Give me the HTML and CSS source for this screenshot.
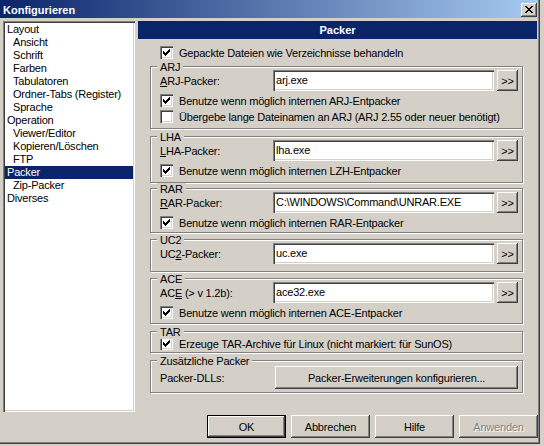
FILE: index.html
```html
<!DOCTYPE html>
<html lang="de">
<head>
<meta charset="utf-8">
<title>Konfigurieren</title>
<link rel="stylesheet" href="styles.css">
</head>
<body>
<div class="window">
  <div class="titlebar">
    <span class="title">Konfigurieren</span>
    <span class="close"><svg width="8" height="7" viewBox="0 0 8 7"><path d="M0 0h2v1h-2zM6 0h2v1h-2zM1 1h2v1h-2zM5 1h2v1h-2zM2 2h4v1h-4zM3 3h2v1h-2zM2 4h4v1h-4zM1 5h2v1h-2zM5 5h2v1h-2zM0 6h2v1h-2zM6 6h2v1h-2z" fill="#000"/></svg></span>
  </div>
  <div class="client">
    <div class="main">
      <ul class="tree">
        <li class="top">Layout</li>
        <li class="sub">Ansicht</li>
        <li class="sub">Schrift</li>
        <li class="sub">Farben</li>
        <li class="sub">Tabulatoren</li>
        <li class="sub">Ordner-Tabs (Register)</li>
        <li class="sub">Sprache</li>
        <li class="top">Operation</li>
        <li class="sub">Viewer/Editor</li>
        <li class="sub">Kopieren/Löschen</li>
        <li class="sub">FTP</li>
        <li class="top selected">Packer</li>
        <li class="sub">Zip-Packer</li>
        <li class="top">Diverses</li>
      </ul>
      <div class="panel">
        <div class="panel-head">Packer</div>
        <div class="check-row top-check"><span class="cb"><svg width="7" height="7" viewBox="0 0 7 7"><path d="M0 2h1v3h-1zM1 3h1v3h-1zM2 4h1v3h-1zM3 3h1v3h-1zM4 2h1v3h-1zM5 1h1v3h-1zM6 0h1v3h-1z" fill="#000"/></svg></span><span class="cb-text">Gepackte Dateien wie Verzeichnisse behandeln</span></div>

        <div class="group g-arj">
          <span class="legend">ARJ</span>
          <div class="field-row"><span class="field-label"><u>A</u>RJ-Packer:</span><span class="input">arj.exe</span><span class="browse">&gt;&gt;</span></div>
          <div class="check-row"><span class="cb"><svg width="7" height="7" viewBox="0 0 7 7"><path d="M0 2h1v3h-1zM1 3h1v3h-1zM2 4h1v3h-1zM3 3h1v3h-1zM4 2h1v3h-1zM5 1h1v3h-1zM6 0h1v3h-1z" fill="#000"/></svg></span><span class="cb-text">Benutze wenn möglich internen ARJ-Entpacker</span></div>
          <div class="check-row row2"><span class="cb"></span><span class="cb-text">Übergebe lange Dateinamen an ARJ (ARJ 2.55 oder neuer benötigt)</span></div>
        </div>

        <div class="group g-lha">
          <span class="legend">LHA</span>
          <div class="field-row"><span class="field-label"><u>L</u>HA-Packer:</span><span class="input">lha.exe</span><span class="browse">&gt;&gt;</span></div>
          <div class="check-row"><span class="cb"><svg width="7" height="7" viewBox="0 0 7 7"><path d="M0 2h1v3h-1zM1 3h1v3h-1zM2 4h1v3h-1zM3 3h1v3h-1zM4 2h1v3h-1zM5 1h1v3h-1zM6 0h1v3h-1z" fill="#000"/></svg></span><span class="cb-text">Benutze wenn möglich internen LZH-Entpacker</span></div>
        </div>

        <div class="group g-rar">
          <span class="legend">RAR</span>
          <div class="field-row"><span class="field-label"><u>R</u>AR-Packer:</span><span class="input">C:\WINDOWS\Command\UNRAR.EXE</span><span class="browse">&gt;&gt;</span></div>
          <div class="check-row"><span class="cb"><svg width="7" height="7" viewBox="0 0 7 7"><path d="M0 2h1v3h-1zM1 3h1v3h-1zM2 4h1v3h-1zM3 3h1v3h-1zM4 2h1v3h-1zM5 1h1v3h-1zM6 0h1v3h-1z" fill="#000"/></svg></span><span class="cb-text">Benutze wenn möglich internen RAR-Entpacker</span></div>
        </div>

        <div class="group g-uc2">
          <span class="legend">UC2</span>
          <div class="field-row"><span class="field-label">UC<u>2</u>-Packer:</span><span class="input">uc.exe</span><span class="browse">&gt;&gt;</span></div>
        </div>

        <div class="group g-ace">
          <span class="legend">ACE</span>
          <div class="field-row"><span class="field-label">AC<u>E</u> (&gt; v 1.2b):</span><span class="input">ace32.exe</span><span class="browse">&gt;&gt;</span></div>
          <div class="check-row"><span class="cb"><svg width="7" height="7" viewBox="0 0 7 7"><path d="M0 2h1v3h-1zM1 3h1v3h-1zM2 4h1v3h-1zM3 3h1v3h-1zM4 2h1v3h-1zM5 1h1v3h-1zM6 0h1v3h-1z" fill="#000"/></svg></span><span class="cb-text">Benutze wenn möglich internen ACE-Entpacker</span></div>
        </div>

        <div class="group g-tar">
          <span class="legend">TAR</span>
          <div class="check-row"><span class="cb"><svg width="7" height="7" viewBox="0 0 7 7"><path d="M0 2h1v3h-1zM1 3h1v3h-1zM2 4h1v3h-1zM3 3h1v3h-1zM4 2h1v3h-1zM5 1h1v3h-1zM6 0h1v3h-1z" fill="#000"/></svg></span><span class="cb-text">Erzeuge TAR-Archive für Linux (nicht markiert: für SunOS)</span></div>
        </div>

        <div class="group g-extra">
          <span class="legend">Zusätzliche Packer</span>
          <div class="field-row"><span class="field-label wide">Packer-DLLs:</span><span class="btn wide-btn">Packer-Erweiterungen konfigurieren...</span></div>
        </div>
      </div>
    </div>
    <div class="buttons">
      <span class="btn dlg default">OK</span>
      <span class="btn dlg">Abbrechen</span>
      <span class="btn dlg">Hilfe</span>
      <span class="btn dlg disabled">Anwenden</span>
    </div>
  </div>
</div>
</body>
</html>
```

FILE: styles.css
```css
* { box-sizing: border-box; }
html, body { margin: 0; padding: 0; }
body {
  background: #d4d0c8;
  font-family: "Liberation Sans", Arial, sans-serif;
  font-size: 11px;
  letter-spacing: -0.2px;
  color: #000;
  width: 544px;
  height: 446px;
  overflow: hidden;
}
.window {
  width: 540px;
  height: 444px;
  background: #d4d0c8;
  box-shadow: inset -1px -1px #404040, inset -2px -2px #808080;
}
.titlebar {
  width: 538px;
  height: 18px;
  background: linear-gradient(to right, #0a246a, #a6caf0);
  display: flex;
  align-items: flex-start;
  justify-content: space-between;
  padding: 0 1px 0 3px;
}
.title {
  color: #fff;
  font-weight: bold;
  letter-spacing: 0;
  line-height: 13px;
  margin-top: 4px;
}
.close {
  width: 16px;
  height: 14px;
  margin-top: 3px;
  background: #d4d0c8;
  box-shadow: inset -1px -1px #404040, inset 1px 1px #fff, inset -2px -2px #808080, inset 2px 2px #d4d0c8;
  display: flex;
  align-items: center;
  justify-content: center;
  padding-bottom: 1px;
}
.close svg { display: block; }
.client { padding: 3px 1px 0 3px; }
.main { display: flex; gap: 3px; height: 391px; }
.tree {
  list-style: none;
  margin: 0;
  padding: 2px;
  width: 132px;
  height: 391px;
  background: #fff;
  box-shadow: inset 1px 1px #808080, inset 2px 2px #404040, inset -1px -1px #fff, inset -2px -2px #d4d0c8;
}
.tree li { height: 13px; line-height: 13px; white-space: nowrap; }
.tree li.top { padding-left: 2px; }
.tree li.sub { padding-left: 8px; }
.tree li.selected { background: #0a246a; color: #fff; }
.panel { width: 399px; display: flex; flex-direction: column; }
.panel-head {
  height: 18px;
  line-height: 18px;
  background: #0a246a;
  color: #fff;
  font-weight: bold;
  letter-spacing: 0;
  text-align: center;
}
.check-row { display: flex; align-items: flex-start; height: 16px; line-height: 16px; white-space: nowrap; }
.cb {
  flex: none;
  width: 13px;
  height: 13px;
  margin-top: 1px;
  margin-right: 6px;
  padding: 3px;
  background: #fff;
  box-shadow: inset 1px 1px #808080, inset 2px 2px #404040, inset -1px -1px #fff, inset -2px -2px #d4d0c8;
}
.cb svg { display: block; }
.top-check { margin-top: 6px; padding-left: 22px; }
.group {
  position: relative;
  margin-left: 12px;
  width: 373px;
  border: 1px solid #808080;
  box-shadow: inset 1px 1px #fff, 1px 1px #fff;
  padding: 3px 4px 0 9px;
}
.legend {
  position: absolute;
  left: 6px;
  top: -6px;
  padding: 0 3px;
  line-height: 13px;
  background: #d4d0c8;
  white-space: nowrap;
}
.field-row { display: flex; align-items: center; height: 21px; }
.field-label { width: 113px; flex: none; white-space: nowrap; }
.field-label.wide { width: 115px; }
.input {
  flex: 1;
  height: 21px;
  line-height: 21px;
  padding: 0 3px;
  background: #fff;
  white-space: nowrap;
  overflow: hidden;
  box-shadow: inset 1px 1px #808080, inset 2px 2px #404040, inset -1px -1px #fff, inset -2px -2px #d4d0c8;
}
.browse, .btn {
  background: #d4d0c8;
  box-shadow: inset -1px -1px #404040, inset 1px 1px #fff, inset -2px -2px #808080, inset 2px 2px #d4d0c8;
  display: flex;
  align-items: center;
  justify-content: center;
  white-space: nowrap;
}
.browse { width: 21px; height: 21px; margin-left: 3px; flex: none; }
.group .check-row { margin-top: 2px; }
.group .check-row.row2 { margin-top: 0; }
.g-arj { margin-top: 5px; height: 63px; }
.g-lha { margin-top: 7px; height: 47px; }
.g-rar { margin-top: 5px; height: 45px; }
.g-uc2 { margin-top: 6px; height: 33px; }
.g-ace { margin-top: 6px; height: 46px; }
.g-tar { margin-top: 7px; height: 22px; padding-top: 4px; }
.g-tar .check-row { margin-top: 0; }
.g-extra { margin-top: 7px; height: 33px; padding-top: 5px; }
.g-extra .field-row { height: 23px; }
.wide-btn { flex: 1; height: 23px; }
.buttons {
  display: flex;
  justify-content: flex-end;
  gap: 5px;
  margin-top: 3px;
  padding-right: 1px;
}
.btn.dlg { width: 79px; height: 23px; }
.btn.default {
  border: 1px solid #000;
  box-shadow: inset -1px -1px #404040, inset 1px 1px #fff, inset -2px -2px #808080, inset 2px 2px #d4d0c8;
}
.btn.disabled { color: #808080; text-shadow: 1px 1px #fff; }
```
